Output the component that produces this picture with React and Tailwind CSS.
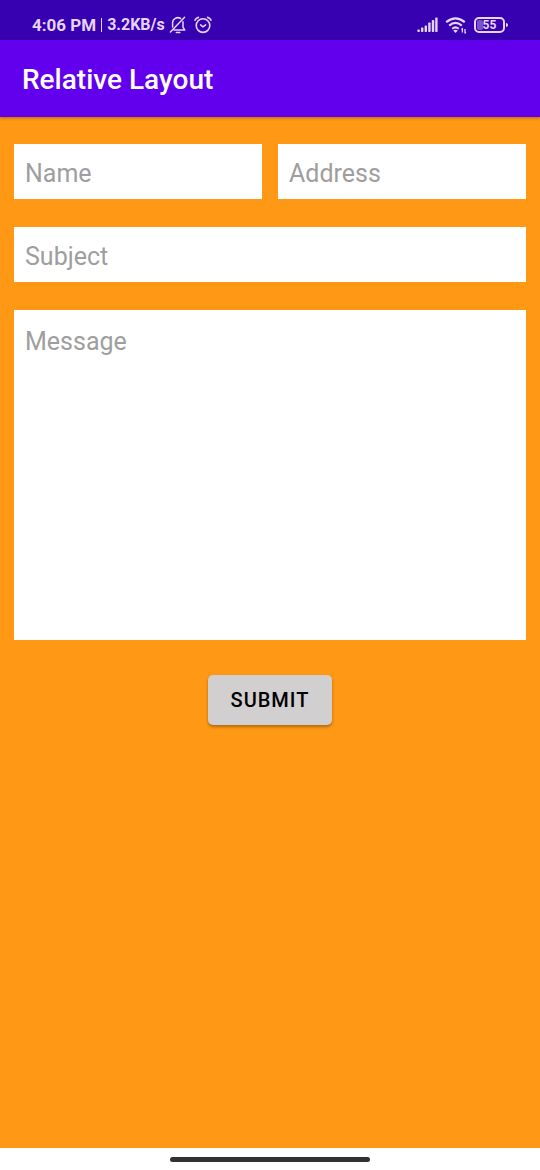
import React from "react";

function MutedBellIcon() {
  return (
    <svg width="18" height="20" viewBox="0 0 18 20" fill="none" stroke="currentColor" strokeWidth="1.5" strokeLinecap="round" strokeLinejoin="round" aria-hidden="true">
      <path d="M3.6 12V7.8a5.2 5.2 0 0 1 8-4.3" />
      <path d="M14 6.8v5.4l1.8 2.9H5" />
      <path d="M7.4 17.6h3.4" />
      <path d="M15.6 2.2L1.4 17" />
    </svg>
  );
}

function AlarmIcon() {
  return (
    <svg width="18" height="20" viewBox="0 0 18 20" fill="none" stroke="currentColor" strokeWidth="1.6" strokeLinecap="round" strokeLinejoin="round" aria-hidden="true">
      <circle cx="9" cy="10.6" r="6.8" />
      <path d="M6.6 9.9L9 11.8l2.6-1.9" />
      <path d="M1 5.2Q2 3 4.4 2.4M17 5.2Q16 3 13.6 2.4" />
    </svg>
  );
}

function SignalIcon() {
  return (
    <svg width="21" height="16" viewBox="0 0 21 16" fill="currentColor" aria-hidden="true">
      <rect x="0.4" y="12.4" width="2.4" height="2.6" rx="0.7" />
      <rect x="4" y="10.4" width="2.4" height="4.6" rx="0.7" />
      <rect x="7.6" y="8.4" width="2.4" height="6.6" rx="0.7" />
      <rect x="11.2" y="5.6" width="2.4" height="9.4" rx="0.7" />
      <rect x="14.8" y="3" width="2.4" height="12" rx="0.7" />
      <rect x="18.2" y="0.4" width="2.4" height="14.6" rx="0.7" />
    </svg>
  );
}

function WifiIcon() {
  return (
    <svg width="22" height="18" viewBox="0 0 22 18" fill="none" stroke="currentColor" aria-hidden="true">
      <path d="M1.2 6.2Q10.5 -1.6 19.8 6.2" strokeWidth="2.2" />
      <path d="M4.2 9.6Q10.5 4.2 16.8 9.6" strokeWidth="2.2" />
      <path d="M7.2 12.7Q10.5 10 13.8 12.7" strokeWidth="2" />
      <path d="M10.5 17L8.2 14.4Q10.5 12.9 12.8 14.4Z" fill="currentColor" stroke="none" />
      <path d="M17.4 12v4.4M20 13v4.4" strokeWidth="1.3" />
      <path d="M16 13.4l1.4-1.8v1.8zM21.4 16l-1.4 1.8v-1.8z" fill="currentColor" stroke="none" />
    </svg>
  );
}

function Battery({ level }) {
  return (
    <div className="flex items-center">
      <div className="relative flex h-4 w-[31px] items-center justify-center rounded-[5px] border-2 border-[#e6d5f8]">
        <span className="absolute inset-y-px left-px w-1.5 rounded-xs bg-[#7a52cc]" />
        <span className="relative text-[12px] leading-none font-bold">{level}</span>
      </div>
      <span className="ml-px h-1 w-0.5 rounded-r-sm bg-[#e6d5f8]" />
    </div>
  );
}

function StatusBar() {
  return (
    <div className="flex h-10 items-end justify-between bg-[#3700b0] px-8 pb-1 text-[#e6d5f8]">
      <div className="flex h-[22px] items-center">
        <span className="text-[17px] leading-5 font-bold whitespace-nowrap">4:06 PM</span>
        <span className="mx-[5px] h-3.5 w-px bg-[#e6d5f8]" />
        <span className="text-[16px] leading-5 font-bold whitespace-nowrap">3.2KB/s</span>
        <span className="ml-1 flex gap-[7px]">
          <MutedBellIcon />
          <AlarmIcon />
        </span>
      </div>
      <div className="flex h-[22px] items-center gap-[7px]">
        <SignalIcon />
        <WifiIcon />
        <Battery level="55" />
      </div>
    </div>
  );
}

const fieldClass =
  "block w-full min-w-0 rounded-none bg-white px-[11px] text-[25px] leading-8 text-black outline-none placeholder:text-[#9e9e9e]";

export default function App() {
  return (
    <div className="flex min-h-screen flex-col bg-[#fe9815] font-[Roboto,sans-serif]">
      <StatusBar />
      <header className="relative flex h-[77px] items-center bg-[#6200ee] px-[22px] pt-[3px] shadow-[0_1px_3px_rgba(0,0,0,0.3)]">
        <h1 className="text-[28px] leading-9 font-medium text-white">Relative Layout</h1>
      </header>
      <main className="flex-1">
        <form className="flex flex-col px-3.5 pt-[27px]" onSubmit={(e) => e.preventDefault()}>
          <div className="flex flex-col gap-7">
            <div className="grid grid-cols-2 gap-4">
              <input type="text" name="name" aria-label="Name" placeholder="Name" className={`${fieldClass} h-[55px] pt-[3px]`} />
              <input type="text" name="address" aria-label="Address" placeholder="Address" className={`${fieldClass} h-[55px] pt-[3px]`} />
            </div>
            <input type="text" name="subject" aria-label="Subject" placeholder="Subject" className={`${fieldClass} h-[55px] pt-[3px]`} />
            <textarea name="message" aria-label="Message" placeholder="Message" className={`${fieldClass} h-[330px] resize-none pt-4`} />
          </div>
          <button type="submit" className="mt-[35px] self-center rounded-[5px] bg-[#d2cfd0] px-[23px] py-3 text-[20px] leading-[26px] font-medium tracking-wider text-black shadow-[0_2px_3px_rgba(0,0,0,0.3)]">
            SUBMIT
          </button>
        </form>
      </main>
      <footer className="flex h-[22px] items-center justify-center bg-white">
        <div className="h-[5px] w-[200px] rounded-full bg-[#333333]" />
      </footer>
    </div>
  );
}
